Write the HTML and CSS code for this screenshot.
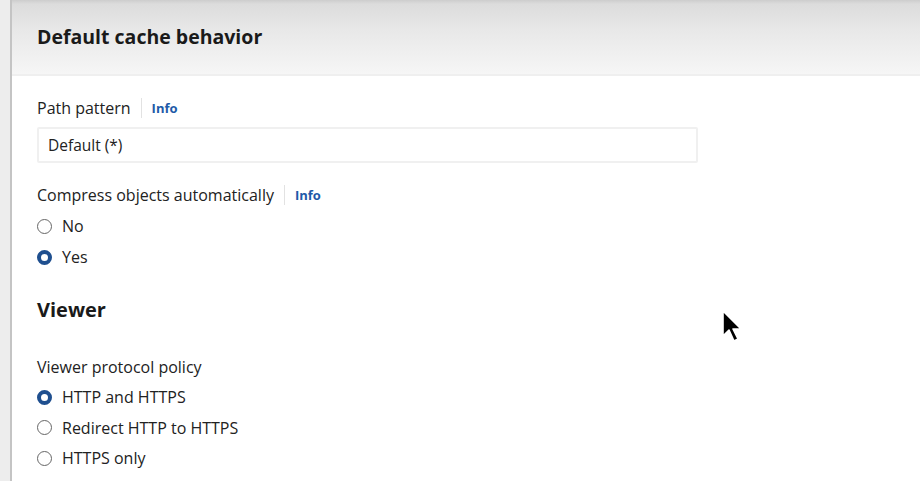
FILE: index.html
```html
<!DOCTYPE html>
<html>
<head>
<meta charset="utf-8">
<link rel="stylesheet" href="styles.css">
</head>
<body>
<div class="page">
  <div class="gutter"></div>
  <div class="card">
    <div class="card-header">
      <h2 class="card-title">Default cache behavior</h2>
    </div>
    <div class="card-body">
      <div class="field field-input">
        <div class="label-row">
          <span class="label with-info">Path pattern</span>
          <span class="info">Info</span>
        </div>
        <div class="input">Default (*)</div>
      </div>
      <div class="field field-radios">
        <div class="label-row">
          <span class="label with-info">Compress objects automatically</span>
          <span class="info">Info</span>
        </div>
        <div class="radio-group">
          <div class="radio"><span class="dot"></span><span class="radio-label">No</span></div>
          <div class="radio"><span class="dot checked"></span><span class="radio-label">Yes</span></div>
        </div>
      </div>
      <h3 class="section-title">Viewer</h3>
      <div class="field">
        <div class="label-row">
          <span class="label">Viewer protocol policy</span>
        </div>
        <div class="radio-group tight">
          <div class="radio"><span class="dot checked"></span><span class="radio-label">HTTP and HTTPS</span></div>
          <div class="radio"><span class="dot"></span><span class="radio-label">Redirect HTTP to HTTPS</span></div>
          <div class="radio"><span class="dot"></span><span class="radio-label">HTTPS only</span></div>
        </div>
      </div>
    </div>
  </div>
  <svg class="cursor" width="24" height="36" viewBox="0 0 24 36">
    <path d="M2 2 L2 27 L8 21 L13 32 L17 30 L12 20 L20 20 Z" fill="#000" stroke="#fff" stroke-width="1.6" stroke-linejoin="round"/>
  </svg>
</div>
</body>
</html>
```

FILE: styles.css
```css
* { box-sizing: border-box; }
html, body { margin: 0; padding: 0; }
body {
  font-family: "Open Sans", "Noto Sans", sans-serif;
  color: #16191f;
  background: #fff;
  width: 920px;
  height: 481px;
  overflow: hidden;
}
.page {
  position: relative;
  display: flex;
  height: 481px;
}
.gutter {
  width: 12px;
  flex: none;
  background: #ededed;
  border-right: 2px solid #c4c4c4;
}
.card {
  flex: 1;
  display: flex;
  flex-direction: column;
  min-height: 0;
}
.card-header {
  flex: none;
  height: 76px;
  background: linear-gradient(#cdcdcd 0px, #dcdcdc 4px, #e8e8e8 30px, #f4f4f4 68px, #f6f6f6 74px);
  border-bottom: 2px solid #efefef;
  padding: 24px 0 0 25px;
}
.card-title {
  margin: 0;
  font-size: 19.5px;
  font-weight: 700;
  line-height: 26px;
  color: #1a1a1a;
}
.card-body {
  flex: none;
  padding: 20px 23px 0 25px;
}
.field-input { margin-bottom: 20px; }
.field-radios { margin-bottom: 28px; }
.label-row {
  display: flex;
  align-items: center;
  height: 24px;
}
.label {
  font-size: 16px;
  color: #222;
  line-height: 20px;
}
.label.with-info {
  padding-right: 10px;
  border-right: 1px solid #e2e2e2;
}
.info {
  font-size: 13px;
  font-weight: 700;
  color: #1e5aa8;
  padding-left: 10px;
}
.input {
  margin-top: 7px;
  width: 661px;
  height: 36px;
  border: 2px solid #f0f0f0;
  border-radius: 2px;
  padding: 0 0 0 9px;
  display: flex;
  align-items: center;
  font-size: 15.5px;
  color: #222;
}
.radio-group {
  display: flex;
  flex-direction: column;
  gap: 7px;
  margin-top: 7px;
}
.radio-group.tight {
  gap: 6.5px;
  margin-top: 6px;
}
.radio {
  display: flex;
  align-items: center;
  height: 24px;
}
.dot {
  width: 15px;
  height: 15px;
  border-radius: 50%;
  border: 1.5px solid #666;
  margin-right: 10px;
  flex: none;
}
.dot.checked {
  border: 4.5px solid #1f4f8f;
  background: #fff;
}
.radio-label {
  font-size: 16px;
  color: #222;
}
.section-title {
  margin: 0 0 32px 0;
  font-size: 20px;
  font-weight: 700;
  color: #1a1a1a;
  line-height: 26px;
}
.cursor {
  position: absolute;
  left: 721px;
  top: 309px;
}
```
